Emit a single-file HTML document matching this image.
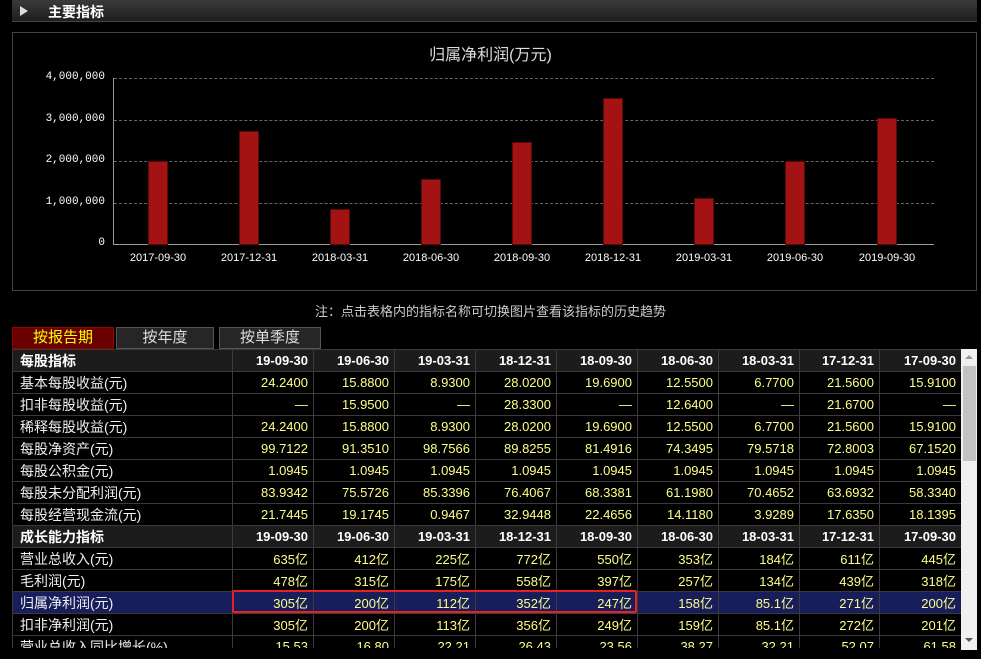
<!DOCTYPE html>
<html><head><meta charset="utf-8"><style>
*{margin:0;padding:0;box-sizing:border-box}
body{width:981px;height:659px;background:#000;position:relative;overflow:hidden;font-family:"Liberation Sans","Noto Sans CJK SC",sans-serif;color:#fff}
.abs{position:absolute}
#hdr{left:12px;top:0;width:965px;height:22px;background:linear-gradient(#3a3a3a,#1e1e1e);border-bottom:1px solid #444}
#hdr .t{left:36px;top:2px;font-size:14px;font-weight:bold;color:#fff}
#hdr .tri{left:8px;top:6px;width:0;height:0;border-left:8px solid #ddd;border-top:5px solid transparent;border-bottom:5px solid transparent}
#chart{left:12px;top:32px;width:965px;height:259px;border:1px solid #444}
.grid{left:114px;width:820px;height:0;border-top:1px dashed #666}
.yl{width:95px;text-align:right;left:10px;font-size:11px;font-family:"Liberation Mono",monospace}
.bar{width:20px;background:#a31313;border:1px solid #5a0808}
.xl{font-size:11px;width:90px;text-align:center;top:252px}
.tab{top:327px;height:22px;width:122px;border:1px solid #555;background:#262626;color:#ddd;font-size:15px;text-align:center;line-height:20px}
table{position:absolute;left:12px;top:349px;border-collapse:collapse;table-layout:fixed}
td{height:22px;border:1px solid #3a3a3a;font-size:13px;padding:0 5px;white-space:nowrap;overflow:hidden;color:#ffff88;text-align:right;font-family:"Liberation Sans","Noto Sans CJK SC",sans-serif}
td:first-child{color:#eee;text-align:left;padding-left:7px;font-size:14px}
tr.h td{background:#1c1c1c;color:#fff;font-weight:bold}
tr.sel td{background:#181e5c}
</style></head><body>
<div id="hdr" class="abs"><div class="tri abs"></div><div class="t abs">主要指标</div></div>
<div id="chart" class="abs"></div>
<div class="abs" style="left:0;width:981px;top:41px;text-align:center;font-size:16px;color:#ddd">归属净利润(万元)</div>
<div class="abs grid" style="top:78px"></div><div class="abs grid" style="top:120px"></div><div class="abs grid" style="top:161px"></div><div class="abs grid" style="top:203px"></div>
<div class="abs" style="left:113px;top:78px;width:1px;height:167px;background:#999"></div>
<div class="abs" style="left:113px;top:244px;width:821px;height:1px;background:#999"></div>
<div class="abs yl" style="top:71px">4,000,000</div><div class="abs yl" style="top:113px">3,000,000</div><div class="abs yl" style="top:154px">2,000,000</div><div class="abs yl" style="top:196px">1,000,000</div><div class="abs yl" style="top:237px">0</div>
<div class="abs bar" style="left:148px;top:161px;height:84px"></div>
<div class="abs bar" style="left:239px;top:131px;height:114px"></div>
<div class="abs bar" style="left:330px;top:209px;height:36px"></div>
<div class="abs bar" style="left:421px;top:179px;height:66px"></div>
<div class="abs bar" style="left:512px;top:142px;height:103px"></div>
<div class="abs bar" style="left:603px;top:98px;height:147px"></div>
<div class="abs bar" style="left:694px;top:198px;height:47px"></div>
<div class="abs bar" style="left:785px;top:161px;height:84px"></div>
<div class="abs bar" style="left:877px;top:118px;height:127px"></div>
<div class="abs xl" style="left:113px">2017-09-30</div><div class="abs xl" style="left:204px">2017-12-31</div><div class="abs xl" style="left:295px">2018-03-31</div><div class="abs xl" style="left:386px">2018-06-30</div><div class="abs xl" style="left:477px">2018-09-30</div><div class="abs xl" style="left:568px">2018-12-31</div><div class="abs xl" style="left:659px">2019-03-31</div><div class="abs xl" style="left:750px">2019-06-30</div><div class="abs xl" style="left:842px">2019-09-30</div>
<div class="abs" style="left:0;width:981px;top:301px;text-align:center;font-size:13px;color:#ccc">注：点击表格内的指标名称可切换图片查看该指标的历史趋势</div>
<div class="abs tab" style="left:12px;width:102px;background:#6a0000;color:#ffff00;border-color:#900">按报告期</div>
<div class="abs tab" style="left:116px;width:98px">按年度</div>
<div class="abs tab" style="left:219px;width:102px">按单季度</div>
<table>
<colgroup><col style="width:220px"><col style="width:81px"><col style="width:81px"><col style="width:81px"><col style="width:81px"><col style="width:81px"><col style="width:81px"><col style="width:81px"><col style="width:80px"><col style="width:82px"></colgroup>
<tr class="h"><td>每股指标</td><td>19-09-30</td><td>19-06-30</td><td>19-03-31</td><td>18-12-31</td><td>18-09-30</td><td>18-06-30</td><td>18-03-31</td><td>17-12-31</td><td>17-09-30</td></tr>
<tr><td>基本每股收益(元)</td><td>24.2400</td><td>15.8800</td><td>8.9300</td><td>28.0200</td><td>19.6900</td><td>12.5500</td><td>6.7700</td><td>21.5600</td><td>15.9100</td></tr>
<tr><td>扣非每股收益(元)</td><td>—</td><td>15.9500</td><td>—</td><td>28.3300</td><td>—</td><td>12.6400</td><td>—</td><td>21.6700</td><td>—</td></tr>
<tr><td>稀释每股收益(元)</td><td>24.2400</td><td>15.8800</td><td>8.9300</td><td>28.0200</td><td>19.6900</td><td>12.5500</td><td>6.7700</td><td>21.5600</td><td>15.9100</td></tr>
<tr><td>每股净资产(元)</td><td>99.7122</td><td>91.3510</td><td>98.7566</td><td>89.8255</td><td>81.4916</td><td>74.3495</td><td>79.5718</td><td>72.8003</td><td>67.1520</td></tr>
<tr><td>每股公积金(元)</td><td>1.0945</td><td>1.0945</td><td>1.0945</td><td>1.0945</td><td>1.0945</td><td>1.0945</td><td>1.0945</td><td>1.0945</td><td>1.0945</td></tr>
<tr><td>每股未分配利润(元)</td><td>83.9342</td><td>75.5726</td><td>85.3396</td><td>76.4067</td><td>68.3381</td><td>61.1980</td><td>70.4652</td><td>63.6932</td><td>58.3340</td></tr>
<tr><td>每股经营现金流(元)</td><td>21.7445</td><td>19.1745</td><td>0.9467</td><td>32.9448</td><td>22.4656</td><td>14.1180</td><td>3.9289</td><td>17.6350</td><td>18.1395</td></tr>
<tr class="h"><td>成长能力指标</td><td>19-09-30</td><td>19-06-30</td><td>19-03-31</td><td>18-12-31</td><td>18-09-30</td><td>18-06-30</td><td>18-03-31</td><td>17-12-31</td><td>17-09-30</td></tr>
<tr><td>营业总收入(元)</td><td>635亿</td><td>412亿</td><td>225亿</td><td>772亿</td><td>550亿</td><td>353亿</td><td>184亿</td><td>611亿</td><td>445亿</td></tr>
<tr><td>毛利润(元)</td><td>478亿</td><td>315亿</td><td>175亿</td><td>558亿</td><td>397亿</td><td>257亿</td><td>134亿</td><td>439亿</td><td>318亿</td></tr>
<tr class="sel"><td>归属净利润(元)</td><td>305亿</td><td>200亿</td><td>112亿</td><td>352亿</td><td>247亿</td><td>158亿</td><td>85.1亿</td><td>271亿</td><td>200亿</td></tr>
<tr><td>扣非净利润(元)</td><td>305亿</td><td>200亿</td><td>113亿</td><td>356亿</td><td>249亿</td><td>159亿</td><td>85.1亿</td><td>272亿</td><td>201亿</td></tr>
<tr><td>营业总收入同比增长(%)</td><td>15.53</td><td>16.80</td><td>22.21</td><td>26.43</td><td>23.56</td><td>38.27</td><td>32.21</td><td>52.07</td><td>61.58</td></tr>
</table>
<div class="abs" style="left:0;top:648px;width:981px;height:11px;background:#000"></div>
<div class="abs" style="left:232px;top:590px;width:405px;height:23px;border:2px solid #e82020;border-radius:2px"></div>
<div class="abs" style="left:961px;top:349px;width:16px;height:301px;background:#f0f0f0"></div>
<div class="abs" style="left:963px;top:366px;width:13px;height:95px;background:#c2c2c2"></div>
<div class="abs" style="left:965px;top:355px;width:0;height:0;border-left:4px solid transparent;border-right:4px solid transparent;border-bottom:4px solid #999"></div>
<div class="abs" style="left:965px;top:638px;width:0;height:0;border-left:4px solid transparent;border-right:4px solid transparent;border-top:4px solid #555"></div>
</body></html>
